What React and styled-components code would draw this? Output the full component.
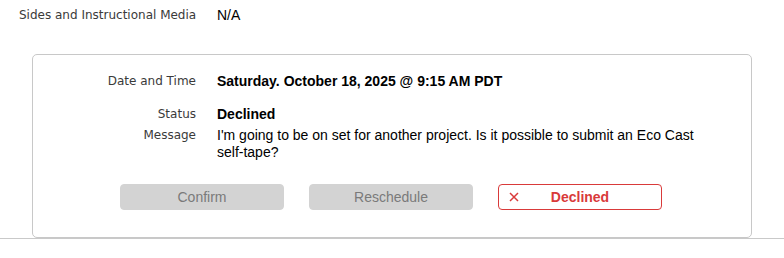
import React from "react";
import styled, { createGlobalStyle } from "styled-components";

const Global = createGlobalStyle`
  html, body { margin: 0; padding: 0; background: #fff; }
  body { font-family: "Liberation Sans", Arial, sans-serif; }
`;

const Page = styled.div`
  width: 784px;
  border-bottom: 1px solid #c9c9c9;
`;

const TopRow = styled.div`
  display: grid;
  grid-template-columns: 198px 1fr;
  padding: 7px 0 0 19px;
  align-items: center;
`;

const Label = styled.div`
  font-family: "DejaVu Sans", Verdana, sans-serif;
  font-size: 12px;
  line-height: 17px;
  color: #3a3a3a;
  text-align: ${(p) => (p.$right ? "right" : "left")};
`;

const Value = styled.div`
  font-family: "Liberation Sans", Arial, sans-serif;
  font-size: 14px;
  line-height: 17px;
  color: #000;
  font-weight: ${(p) => (p.$bold ? 700 : 400)};
`;

const Card = styled.div`
  margin: 30px 32px 0 32px;
  border: 1px solid #c8c8c8;
  border-radius: 5px;
  padding: 18px 32px 27px 0;
`;

const Details = styled.div`
  display: grid;
  grid-template-columns: 163px 1fr;
  column-gap: 21px;
  row-gap: 4px;
  align-items: start;
`;

const Spacer = styled.div`
  grid-column: 1 / -1;
  height: ${(p) => p.$h}px;
`;

const Buttons = styled.div`
  display: flex;
  justify-content: center;
  gap: 25px;
  margin-top: 23px;
  padding-left: 30px;
`;

const Button = styled.div`
  position: relative;
  box-sizing: border-box;
  width: 164px;
  height: 26px;
  display: flex;
  align-items: center;
  justify-content: center;
  border-radius: 4px;
  font-family: "Liberation Sans", Arial, sans-serif;
  font-size: 14px;
  background: ${(p) => (p.$declined ? "#fff" : "#d3d3d3")};
  color: ${(p) => (p.$declined ? "#d93a3a" : "#7a7a7a")};
  border: 1px solid ${(p) => (p.$declined ? "#d93a3a" : "#d3d3d3")};
  font-weight: ${(p) => (p.$declined ? 700 : 400)};
`;

const XIcon = styled.svg`
  position: absolute;
  left: 10px;
  top: 7px;
  width: 10px;
  height: 10px;
`;

export default function App() {
  return (
    <>
      <Global />
      <Page>
        <TopRow>
          <Label>Sides and Instructional Media</Label>
          <Value>N/A</Value>
        </TopRow>
        <Card>
          <Details>
            <Label $right>Date and Time</Label>
            <Value $bold>Saturday. October 18, 2025 @ 9:15 AM PDT</Value>
            <Spacer $h={8} />
            <Label $right>Status</Label>
            <Value $bold>Declined</Value>
            <Label $right>Message</Label>
            <Value>
              I'm going to be on set for another project. Is it possible to submit an Eco Cast
              self-tape?
            </Value>
          </Details>
          <Buttons>
            <Button>Confirm</Button>
            <Button>Reschedule</Button>
            <Button $declined>
              <XIcon viewBox="0 0 10 10">
                <path d="M1 1 L9 9 M9 1 L1 9" stroke="#d93a3a" strokeWidth="1.5" fill="none" />
              </XIcon>
              Declined
            </Button>
          </Buttons>
        </Card>
      </Page>
    </>
  );
}
